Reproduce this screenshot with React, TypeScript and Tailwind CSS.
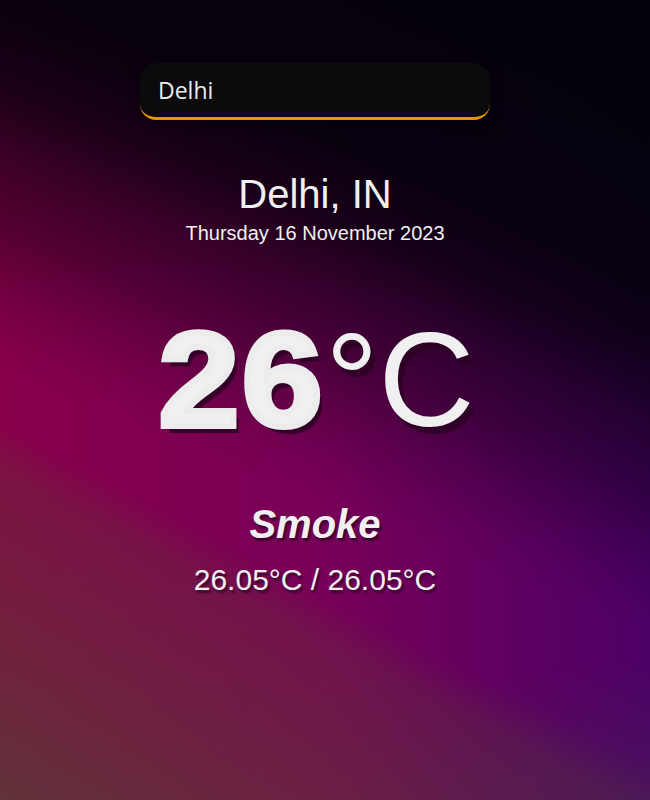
import React from "react"

// layers: bottom-right mute, brownish wash below the diagonal band, darkness towards the top, magenta→violet base
const bg =
  "bg-[radial-gradient(ellipse_45%_18%_at_100%_100%,rgba(70,40,80,0.45)_0%,rgba(70,40,80,0)_100%),linear-gradient(208deg,rgba(95,60,50,0)_0%,rgba(95,60,50,0)_67%,rgba(95,60,50,0.3)_71%,rgba(95,60,50,0.55)_86%,rgba(90,60,55,0.85)_100%),linear-gradient(202deg,rgba(2,1,10,1)_0%,rgba(2,1,10,0.93)_26%,rgba(2,1,10,0.8)_33%,rgba(2,1,10,0.55)_40%,rgba(2,1,10,0.38)_46%,rgba(2,1,10,0.2)_51%,rgba(2,1,10,0.06)_56%,rgba(2,1,10,0)_60%),linear-gradient(90deg,#88004a_0%,#780058_50%,#4c0066_100%)]"

export default function App() {
  return (
    <main
      className={`min-h-[800px] w-[650px] ${bg} text-[#f0f0f0]`}
      style={{ fontFamily: '"Liberation Sans", Arial, sans-serif' }}
    >
      <div className="flex w-[630px] flex-col items-center pt-[63px]">
        <div className="flex h-[57px] w-[350px] items-center rounded-2xl border-b-[3px] border-[#e69500] bg-[#0b0a0d] pl-[18px] shadow-[0_4px_12px_rgba(0,0,0,0.3)]">
          <span className="text-[23px] text-[#ececec]" style={{ fontFamily: '"Open Sans", sans-serif' }}>
            Delhi
          </span>
        </div>

        <h1 className="mt-[51px] text-[40px] leading-[46px]">Delhi, IN</h1>
        <p className="mt-[4px] text-[20px] leading-6">Thursday 16 November 2023</p>

        <div className="mt-[69px] flex items-start leading-none [text-shadow:5px_7px_0_rgba(45,0,35,0.85)]">
          <span className="mr-[12px] ml-[4px] inline-block origin-left scale-x-[1.08] text-[133px] font-bold tracking-[3px] [-webkit-text-stroke:6px_#ececec]">
            26
          </span>
          <span className="text-[133px]">°C</span>
        </div>

        <p className="mt-[53px] text-[40px] font-bold italic leading-[48px] [text-shadow:2px_3px_2px_rgba(50,0,40,0.8)]">
          Smoke
        </p>
        <p className="mt-[16px] text-[30px] leading-8 [text-shadow:2px_3px_2px_rgba(50,0,40,0.8)]">
          26.05°C / 26.05°C
        </p>
      </div>
    </main>
  )
}
